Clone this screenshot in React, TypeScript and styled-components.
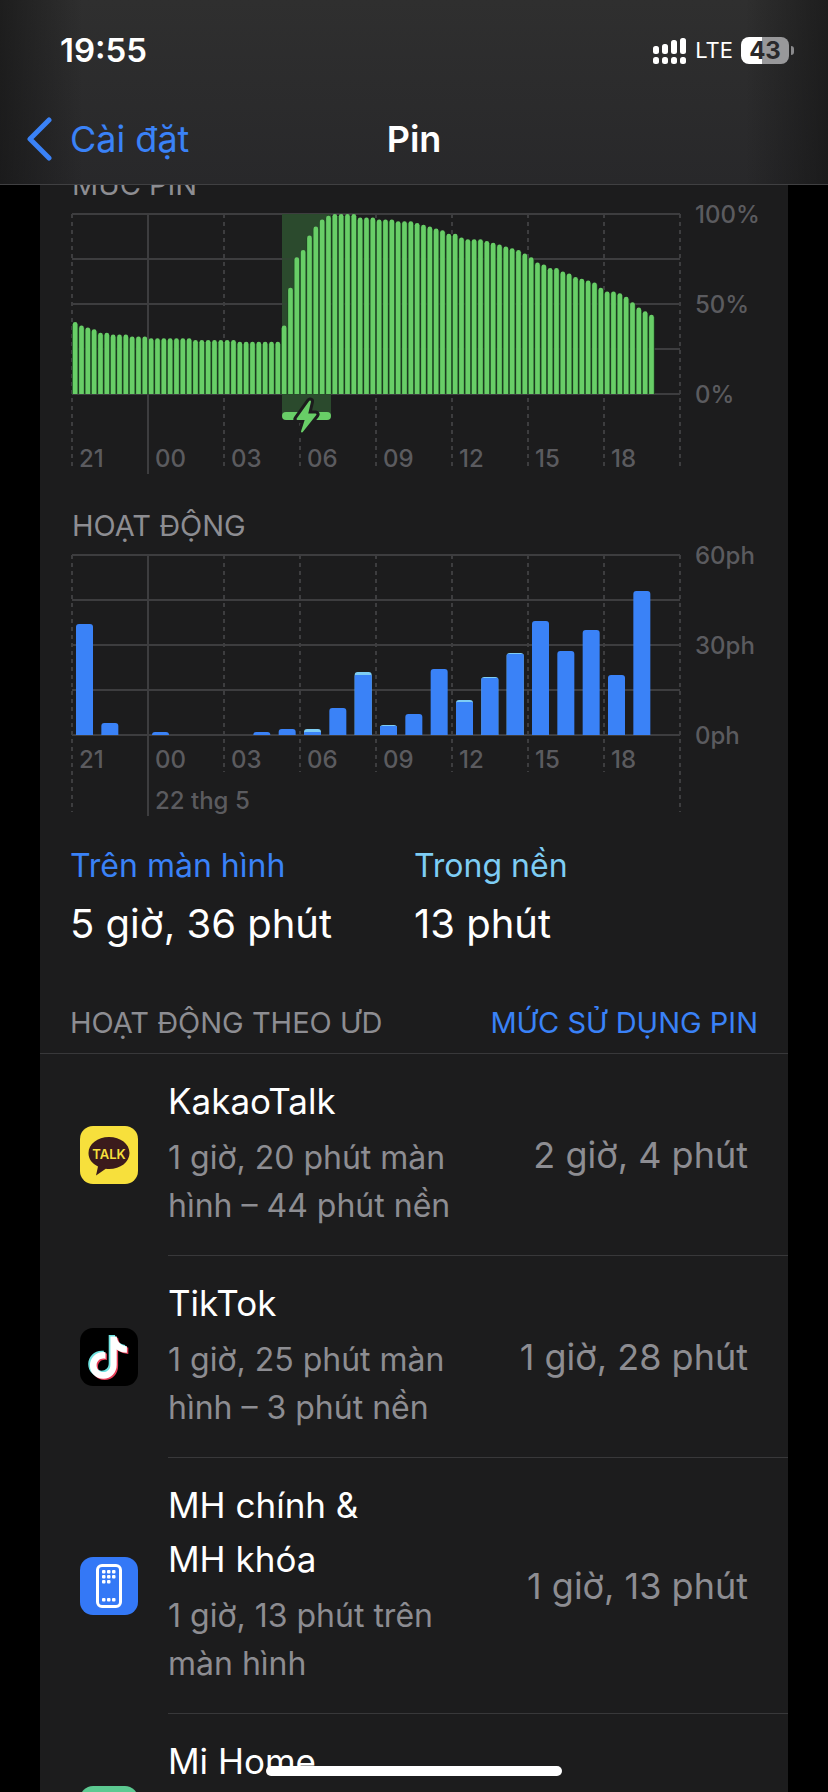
import React from "react";
import styled, { createGlobalStyle } from "styled-components";

const GlobalStyle = createGlobalStyle`
  * { box-sizing: border-box; }
  html, body { margin: 0; background: #000; }
  body { height: 100vh; overflow: hidden; }
  #root { height: 100%; }
`;

const color = {
  card: "#1c1c1d",
  blue: "#3a82f7",
  cyan: "#7ecdf4",
  green: "#68ce67",
  muted: "#8d8d92",
  faint: "#5b5b5f",
  grid: "#3d3d3f",
  line: "#38383a",
};

const Screen = styled.div`
  position: relative;
  height: 100%;
  display: flex;
  flex-direction: column;
  overflow: hidden;
  background: #000;
  color: #fff;
  font-family: Inter, "Liberation Sans", sans-serif;
`;

const Header = styled.header`
  flex: none;
  position: relative;
  z-index: 1;
  border-bottom: 1px solid #404042;
  background:
    linear-gradient(90deg, rgba(18, 18, 18, 0.6), rgba(18, 18, 18, 0) 10%, rgba(18, 18, 18, 0) 90%, rgba(18, 18, 18, 0.6)),
    linear-gradient(#2f2f2f, #28282a);
`;

const StatusBar = styled.div`
  display: flex;
  justify-content: space-between;
  align-items: center;
  height: 100px;
  padding: 0 34px 0 60px;
`;

const Clock = styled.time`
  font-size: 33px;
  font-weight: 600;
  line-height: 40px;
`;

const StatusIcons = styled.div`
  display: flex;
  align-items: center;
  gap: 8px;
`;

const Network = styled.span`
  font-size: 22px;
  font-weight: 400;
  line-height: 32px;
`;

const BatteryWrap = styled.div`
  display: flex;
  align-items: center;
  gap: 2px;
`;

const Battery = styled.div`
  width: 48px;
  height: 27px;
  border-radius: 8px;
  background: linear-gradient(90deg, #fff 44%, #98989a 44%);
  color: #29292b;
  font-size: 24px;
  font-weight: 700;
  line-height: 27px;
  text-align: center;
`;

const BatteryTip = styled.span`
  width: 3px;
  height: 9px;
  border-radius: 0 4px 4px 0;
  background: #8a8a8c;
`;

const NavBar = styled.nav`
  display: grid;
  grid-template-columns: 1fr auto 1fr;
  align-items: center;
  height: 84px;
  padding: 0 26px 6px;
`;

const BackLink = styled.a`
  display: flex;
  align-items: center;
  gap: 18px;
  color: ${color.blue};
  font-size: 36px;
  line-height: 44px;
  text-decoration: none;
`;

const Title = styled.h1`
  margin: 0;
  font-size: 36px;
  font-weight: 600;
  line-height: 44px;
`;

const Card = styled.main`
  flex: 1;
  min-height: 0;
  margin: 0 40px;
  background: ${color.card};
`;

const ChartSection = styled.section<{ $clipped?: boolean }>`
  display: grid;
  gap: 9px;
  padding: 0 32px;
  margin-top: ${(p) => (p.$clipped ? "-20px" : "32px")};
`;

const Caption = styled.h2`
  margin: 0;
  color: ${color.muted};
  font-size: 29px;
  font-weight: 400;
  line-height: 40px;
`;

const Chart = styled.svg`
  display: block;
  width: 100%;
  height: auto;
  overflow: visible;
  font-size: 24px;
  font-weight: 500;
`;

const Stats = styled.section`
  display: flex;
  gap: 32px;
  padding: 27px 30px 0;
`;

const Stat = styled.div`
  width: 312px;
`;

const StatLabel = styled.div<{ $tone: string }>`
  color: ${(p) => p.$tone};
  font-size: 32px;
  line-height: 44px;
`;

const StatValue = styled.div`
  font-size: 40px;
  line-height: 48px;
  margin-top: 12px;
`;

const ListHeader = styled.div`
  display: flex;
  justify-content: space-between;
  align-items: center;
  margin-top: 55px;
  padding: 0 30px 10px;
  border-bottom: 1px solid ${color.line};
`;

const Toggle = styled.button`
  padding: 0;
  border: 0;
  background: none;
  color: ${color.blue};
  font-family: inherit;
  font-size: 29px;
  line-height: 40px;
`;

const AppList = styled.ul`
  margin: 0;
  padding: 0;
  list-style: none;
`;

const AppRow = styled.li`
  display: flex;
  align-items: center;
  padding-left: 40px;

  &:not(:last-child) > div {
    border-bottom: 1px solid ${color.line};
  }
`;

const AppIcon = styled.svg`
  flex: none;
  width: 58px;
  height: 58px;
  margin-right: 30px;
`;

const RowBody = styled.div`
  flex: 1;
  display: flex;
  justify-content: space-between;
  align-items: center;
  min-height: 202px;
  padding-right: 40px;
`;

const RowText = styled.div`
  align-self: flex-start;
  width: 300px;
  padding: 20px 0 25px;
`;

const AppName = styled.div`
  font-size: 35px;
  line-height: 54px;
`;

const AppDetail = styled.div`
  padding-top: 6px;
  color: ${color.muted};
  font-size: 32px;
  line-height: 48px;
`;

const AppTotal = styled.div`
  color: ${color.muted};
  font-size: 36px;
  line-height: 44px;
  white-space: nowrap;
`;

const HomeIndicator = styled.div`
  position: absolute;
  left: 50%;
  bottom: 16px;
  width: 296px;
  height: 10px;
  margin-left: -148px;
  border-radius: 5px;
  background: #fff;
`;

const levels = [
  40, 38, 37, 36, 34, 34, 33, 33, 33, 32, 32, 32, 31, 31, 31, 31, 31, 31, 31, 30, 30, 30, 30,
  30, 30, 30, 29, 29, 29, 29, 29, 29, 29, 38, 59, 76, 80, 88, 93, 97, 99, 100, 100, 100, 100, 98,
  98, 98, 97, 97, 97, 96, 96, 96, 95, 94, 93, 92, 91, 89, 89, 87, 86, 86, 86, 85, 84, 83, 82,
  81, 80, 78, 76, 73, 72, 70, 70, 68, 67, 65, 64, 63, 62, 59, 57, 57, 56, 54, 51, 48, 46, 44,
];

const activity: [number, number][] = [
  [37, 0], [4, 0], [0, 0], [1, 0], [0, 0], [0, 0], [0, 0], [1, 0], [2, 0], [1, 1], [9, 0], [20, 1],
  [3, 0.3], [7, 0], [22, 0], [11, 0.7], [19, 0.3], [27, 0.3], [38, 0], [28, 0], [35, 0], [20, 0], [48, 0],
];

const hours = ["21", "00", "03", "06", "09", "12", "15", "18"];

const topRounded = (x: number, y: number, w: number, h: number, r: number) =>
  `M${x} ${y + h}V${y + r}a${r} ${r} 0 0 1 ${r} ${-r}h${w - 2 * r}a${r} ${r} 0 0 1 ${r} ${r}V${y + h}Z`;

interface GridProps {
  scale: string[];
  labelY: number;
  dashEnd: number;
  edgeEnd: number;
}

function Grid({ scale, labelY, dashEnd, edgeEnd }: GridProps) {
  return (
    <g>
      <g stroke={color.grid} strokeWidth="2">
        {[0, 45, 90, 135, 180].map((y) => (
          <path key={y} d={`M0 ${y}H608`} />
        ))}
        {[...hours, ""].map((_, i) => (
          <path
            key={i}
            d={`M${i * 76} 0V${i === 1 ? edgeEnd + 4 : i === 0 || i === 8 ? edgeEnd : dashEnd}`}
            strokeDasharray={i === 1 ? undefined : "4 4"}
          />
        ))}
      </g>
      <g fill={color.faint}>
        {hours.map((h, i) => (
          <text key={h} x={i * 76 + 7} y={labelY}>{h}</text>
        ))}
        {scale.map((s, i) => (
          <text key={s} x="623" y={i * 90 + 9}>{s}</text>
        ))}
      </g>
    </g>
  );
}

function LevelChart() {
  const step = 76 / 12;
  const bolt = "M238 187.500L225.500 205h8.500L230 217.500 243.500 200.500h-8.500Z";
  return (
    <Chart viewBox="0 0 684 260" role="img" aria-label="Mức pin">
      <Grid scale={["100%", "50%", "0%"]} labelY={253} dashEnd={256} edgeEnd={256} />
      <rect x="210" y="0" width="49" height="202" fill="#2b4a2d" />
      <path d="M0 45H608M0 90H608M0 135H608" stroke={color.grid} strokeWidth="2" opacity="0.3" />
      {levels.map((v, i) => (
        <g key={i}>
          <rect x={i * step} y={180 - v * 1.8 + 2} width={step} height={v * 1.8 - 2} fill="#1d4722" />
          <path d={topRounded(i * step + 0.8, 180 - v * 1.8, 4.7, v * 1.8, 2.3)} fill={color.green} />
        </g>
      ))}
      <rect x="210" y="198" width="49" height="8" rx="4" fill={color.green} />
      <path d={bolt} fill={color.card} stroke={color.card} strokeWidth="8" strokeLinejoin="round" />
      <path d={bolt} fill={color.green} stroke={color.green} strokeWidth="2" strokeLinejoin="round" />
    </Chart>
  );
}

function ActivityChart() {
  const step = 76 / 3;
  return (
    <Chart viewBox="0 0 684 262" role="img" aria-label="Hoạt động">
      <Grid scale={["60ph", "30ph", "0ph"]} labelY={213} dashEnd={217} edgeEnd={257} />
      <text x="83" y="254" fill={color.faint}>22 thg 5</text>
      {activity.map(([on, bg], i) => {
        const total = (on + bg) * 3;
        if (!total) return null;
        const x = i * step + 4;
        const r = Math.min(3, total);
        return (
          <g key={i}>
            <path d={topRounded(x, 180 - total, 17, total, r)} fill={bg ? color.cyan : color.blue} />
            {bg > 0 && <path d={topRounded(x, 180 - on * 3, 17, on * 3, 1)} fill={color.blue} />}
          </g>
        );
      })}
    </Chart>
  );
}

const KakaoIcon = () => (
  <AppIcon viewBox="0 0 58 58" aria-hidden="true">
    <rect width="58" height="58" rx="13" fill="#f7e03c" />
    <path d="M29 11C17.500 11 8.500 18 8.500 27c0 6 3.600 10.700 9.500 13.500L16 49.500l9.800-6.800c1 .1 2 .2 3.200.2 11.500 0 20.500-7 20.500-16S40.500 11 29 11Z" fill="#3b1b1c" />
    <text x="29" y="33" textAnchor="middle" fontSize="13" fontWeight="600" fill="#f7e03c">TALK</text>
  </AppIcon>
);

const note = "M28.500 7.500h6.300c.6 5.600 4.300 9.300 10.200 9.800v6.400c-3.800 0-7.200-1.200-10.200-3.300v15.300c0 8-5.800 14-13.400 14S8 43.800 8 36.500s5.800-13.400 13.600-13.400l2 .1v6.700c-4.900-1.300-8.900 2-8.900 6.300 0 3.900 3 6.900 6.700 6.900s7.100-2.600 7.100-7.400Z";

const TikTokIcon = () => (
  <AppIcon viewBox="0 0 58 58" aria-hidden="true">
    <rect width="58" height="58" rx="13" fill="#000" />
    <path d={note} transform="translate(3.300 2.200)" fill="#e8405a" />
    <path d={note} transform="translate(.2 -.4)" fill="#6fe3e1" />
    <path d={note} transform="translate(1.900 1)" fill="#fff" />
  </AppIcon>
);

const phoneDots = [
  [22, 13], [27, 13], [32, 13],
  [22, 18], [27, 18], [32, 18],
  [22, 23], [27, 23],
  [22, 41], [27, 41], [32, 41],
];

const PhoneIcon = () => (
  <AppIcon viewBox="0 0 58 58" aria-hidden="true">
    <rect width="58" height="58" rx="13" fill="#3478f6" />
    <rect x="17.500" y="8.500" width="23" height="41" rx="4.500" fill="none" stroke="#fff" strokeWidth="3" />
    <g fill="#fff">
      {phoneDots.map(([x, y]) => (
        <rect key={`${x}-${y}`} x={x} y={y} width="3.500" height="3.500" rx="1" />
      ))}
    </g>
  </AppIcon>
);

const HomeIcon = () => (
  <AppIcon viewBox="0 0 58 58" aria-hidden="true">
    <rect width="58" height="58" rx="13" fill="#5cc991" />
    <path d="M17 40V26l12-9 12 9v14Z" fill="#fff" />
  </AppIcon>
);

const apps = [
  { name: "KakaoTalk", detail: "1 giờ, 20 phút màn hình – 44 phút nền", total: "2 giờ, 4 phút", Icon: KakaoIcon },
  { name: "TikTok", detail: "1 giờ, 25 phút màn hình – 3 phút nền", total: "1 giờ, 28 phút", Icon: TikTokIcon },
  { name: "MH chính & MH\u00a0khóa", detail: "1 giờ, 13 phút trên màn hình", total: "1 giờ, 13 phút", Icon: PhoneIcon },
];

export default function App() {
  return (
    <Screen>
      <GlobalStyle />
      <Header>
        <StatusBar>
          <Clock>19:55</Clock>
          <StatusIcons>
            <svg width="34" height="27" viewBox="0 0 34 27" fill="#fff" aria-hidden="true">
              {[9, 7, 3, 1].map((y, i) => (
                <g key={y}>
                  <rect x={i * 9} y={y} width="6" height={17 - y} rx="2.500" />
                  <rect x={i * 9} y="20" width="6" height="7" rx="2.500" />
                </g>
              ))}
            </svg>
            <Network>LTE</Network>
            <BatteryWrap>
              <Battery>43</Battery>
              <BatteryTip />
            </BatteryWrap>
          </StatusIcons>
        </StatusBar>
        <NavBar>
          <BackLink href="#settings">
            <svg width="26" height="44" viewBox="0 0 26 44" fill="none" stroke={color.blue} strokeWidth="5" strokeLinecap="round" strokeLinejoin="round" aria-hidden="true">
              <path d="M23 3 4 22l19 19" />
            </svg>
            Cài đặt
          </BackLink>
          <Title>Pin</Title>
        </NavBar>
      </Header>
      <Card>
        <ChartSection $clipped>
          <Caption>MỨC PIN</Caption>
          <LevelChart />
        </ChartSection>
        <ChartSection>
          <Caption>HOẠT ĐỘNG</Caption>
          <ActivityChart />
        </ChartSection>
        <Stats>
          <Stat>
            <StatLabel $tone={color.blue}>Trên màn hình</StatLabel>
            <StatValue>5 giờ, 36 phút</StatValue>
          </Stat>
          <Stat>
            <StatLabel $tone={color.cyan}>Trong nền</StatLabel>
            <StatValue>13 phút</StatValue>
          </Stat>
        </Stats>
        <ListHeader>
          <Caption>HOẠT ĐỘNG THEO ƯD</Caption>
          <Toggle type="button">MỨC SỬ DỤNG PIN</Toggle>
        </ListHeader>
        <AppList>
          {apps.map(({ name, detail, total, Icon }) => (
            <AppRow key={name}>
              <Icon />
              <RowBody>
                <RowText>
                  <AppName>{name}</AppName>
                  <AppDetail>{detail}</AppDetail>
                </RowText>
                <AppTotal>{total}</AppTotal>
              </RowBody>
            </AppRow>
          ))}
          <AppRow>
            <HomeIcon />
            <RowBody>
              <RowText>
                <AppName>Mi Home</AppName>
              </RowText>
            </RowBody>
          </AppRow>
        </AppList>
      </Card>
      <HomeIndicator />
    </Screen>
  );
}
